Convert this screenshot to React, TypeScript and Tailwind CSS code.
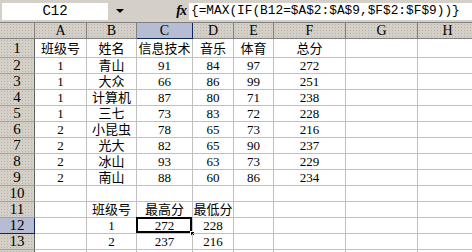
import React from "react";

const colW = ["w-[52px]", "w-[50px]", "w-[56px]", "w-[41px]", "w-[40px]", "w-[72px]", "w-[72px]", "w-[60px]"];
const letters = ["A", "B", "C", "D", "E", "F", "G", "H"];

const rows: string[][] = [
  ["班级号", "姓名", "信息技术", "音乐", "体育", "总分", "", ""],
  ["1", "青山", "91", "84", "97", "272", "", ""],
  ["1", "大众", "66", "86", "99", "251", "", ""],
  ["1", "计算机", "87", "80", "71", "238", "", ""],
  ["1", "三七", "73", "83", "72", "228", "", ""],
  ["2", "小昆虫", "78", "65", "73", "216", "", ""],
  ["2", "光大", "82", "65", "90", "237", "", ""],
  ["2", "冰山", "93", "63", "73", "229", "", ""],
  ["2", "南山", "88", "60", "86", "234", "", ""],
  ["", "", "", "", "", "", "", ""],
  ["", "班级号", "最高分", "最低分", "", "", "", ""],
  ["", "1", "272", "228", "", "", "", ""],
  ["", "2", "237", "216", "", "", "", ""],
  ["", "", "", "", "", "", "", ""],
];

const tex =
  "[background-image:radial-gradient(circle,#b4b0a8_0.6px,transparent_0.9px)] [background-size:3px_3px]";

const cellFont = "font-['Liberation_Serif','Noto_Sans_CJK_SC',serif] text-[13px]";

export default function App() {
  return (
    <div className="w-[472px] h-[252px] overflow-hidden bg-white text-black">
      {/* formula bar */}
      <div className="h-[22px] bg-[#d4d0c8] flex items-center">
        <div className="ml-[2px] w-[106px] h-[17px] bg-white flex items-center justify-center font-['Liberation_Mono',monospace] text-[14px] leading-none">
          C12
        </div>
        <div className="w-[24px] flex justify-center">
          <div className="w-0 h-0 border-l-[4px] border-r-[4px] border-t-[4px] border-l-transparent border-r-transparent border-t-black" />
        </div>
        <div className="w-[57px] flex justify-end pr-[3px] font-['Liberation_Serif',serif] italic font-bold text-[14px] leading-none">
          <span className="tracking-[-1px]">fx</span>
        </div>
        <div className="flex-1 h-[17px] bg-white flex items-center pl-[2px] font-['Liberation_Mono',monospace] text-[12.8px] leading-none whitespace-nowrap overflow-hidden">
          {"{=MAX(IF(B12=$A$2:$A$9,$F$2:$F$9))}"}
        </div>
      </div>
      {/* column headers */}
      <div className="flex h-[17px] border-t border-[#808080]">
        <div className={`w-[35px] shrink-0 bg-[#d4d0c8] ${tex} border-r border-b border-[#808080]`} />
        {letters.map((l, i) => (
          <div
            key={l}
            className={`${colW[i]} shrink-0 flex items-center justify-center font-['Liberation_Serif',serif] text-[14px] leading-none border-r border-b ${
              i === 2
                ? "bg-[#b6bdd2] border-r-[#0a246a] border-b-[#0a246a]"
                : `bg-[#d4d0c8] ${tex} border-[#808080]`
            }`}
          >
            {l}
          </div>
        ))}
      </div>
      {rows.map((r, ri) => {
        const rowNum = ri + 1;
        const h = ri === 0 ? "h-[19px]" : "h-[16px]";
        const sel = rowNum === 12;
        return (
          <div key={ri} className={`flex ${h}`}>
            <div
              className={`w-[35px] shrink-0 flex items-center justify-center font-['Liberation_Serif',serif] text-[15px] leading-none border-r border-b ${
                sel
                  ? "bg-[#b6bdd2] border-[#0a246a]"
                  : `bg-[#d4d0c8] ${tex} border-r-[#606060] border-b-[#a0a0a0]`
              }`}
            >
              {rowNum <= 13 ? rowNum : ""}
            </div>
            {r.map((c, ci) => {
              const isSel = rowNum === 12 && ci === 2;
              return (
                <div
                  key={ci}
                  className={`${colW[ci]} shrink-0 relative flex items-center justify-center whitespace-nowrap ${cellFont} leading-none border-r border-b border-[#c0c0c0]`}
                >
                  {isSel && (
                    <>
                      <div className="absolute -left-[1px] -top-[1px] right-0 bottom-0 border-[2px] border-black" />
                      <div className="absolute -right-[3px] -bottom-[3px] w-[5px] h-[5px] bg-black border border-white" />
                    </>
                  )}
                  <span className="relative">{c}</span>
                </div>
              );
            })}
          </div>
        );
      })}
    </div>
  );
}
